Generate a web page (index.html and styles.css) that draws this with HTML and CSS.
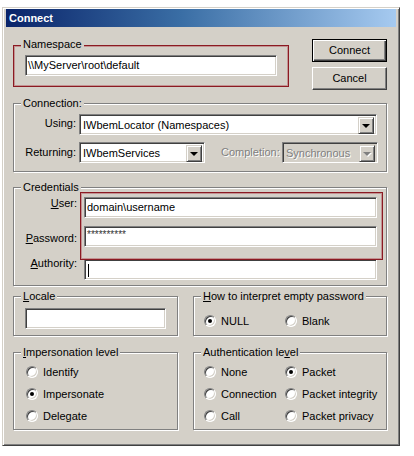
FILE: index.html
```html
<!DOCTYPE html>
<html lang="en">
<head>
<meta charset="utf-8">
<title>Connect</title>
<link rel="stylesheet" href="styles.css">
</head>
<body>
<div class="dialog">
  <div class="titlebar">Connect</div>
  <div class="content">
    <div class="top-row">
      <div class="group ns-group">
        <span class="group-label">Namespace</span>
        <div class="field ns-field">\\MyServer\root\default</div>
      </div>
      <div class="buttons">
        <div class="btn btn-default">Connect</div>
        <div class="btn btn-cancel">Cancel</div>
      </div>
    </div>

    <div class="group conn-group">
      <span class="group-label">Connection:</span>
      <div class="row">
        <span class="lbl conn-lbl lbl-using">Using:</span>
        <div class="combo using-combo"><span class="combo-text">IWbemLocator (Namespaces)</span><span class="dd"><i class="arrow"></i></span></div>
      </div>
      <div class="row row-returning">
        <span class="lbl conn-lbl">Returning:</span>
        <div class="combo ret-combo"><span class="combo-text">IWbemServices</span><span class="dd"><i class="arrow"></i></span></div>
        <span class="disabled-text completion-lbl">Completion:</span>
        <div class="combo combo-disabled sync-combo"><span class="combo-text">Synchronous</span><span class="dd"><i class="arrow"></i></span></div>
      </div>
    </div>

    <div class="group cred-group">
      <span class="group-label">Credentials</span>
      <div class="row">
        <span class="lbl cred-lbl"><u>U</u>ser:</span>
        <div class="field cred-field">domain\username</div>
      </div>
      <div class="row row-password">
        <span class="lbl cred-lbl lbl-password"><u>P</u>assword:</span>
        <div class="field cred-field password">**********</div>
      </div>
      <div class="row row-authority">
        <span class="lbl cred-lbl lbl-authority"><u>A</u>uthority:</span>
        <div class="field cred-field"><span class="caret"></span></div>
      </div>
      <div class="highlight cred-highlight"></div>
    </div>

    <div class="pair-row pair-row-1">
      <div class="group locale-group">
        <span class="group-label"><u>L</u>ocale</span>
        <div class="field locale-field"></div>
      </div>
      <div class="group howto-group">
        <span class="group-label"><u>H</u>ow to interpret empty password</span>
        <div class="radio-grid">
          <div class="radio"><span class="dot checked"></span>NULL</div>
          <div class="radio"><span class="dot"></span>Blank</div>
        </div>
      </div>
    </div>

    <div class="pair-row pair-row-2">
      <div class="group imp-group">
        <span class="group-label"><u>I</u>mpersonation level</span>
        <div class="radio"><span class="dot"></span>Identify</div>
        <div class="radio"><span class="dot checked"></span>Impersonate</div>
        <div class="radio"><span class="dot"></span>Delegate</div>
      </div>
      <div class="group auth-group">
        <span class="group-label">Authentication le<u>v</u>el</span>
        <div class="radio-grid">
          <div class="radio"><span class="dot"></span>None</div>
          <div class="radio"><span class="dot checked"></span>Packet</div>
          <div class="radio"><span class="dot"></span>Connection</div>
          <div class="radio"><span class="dot"></span>Packet integrity</div>
          <div class="radio"><span class="dot"></span>Call</div>
          <div class="radio"><span class="dot"></span>Packet privacy</div>
        </div>
      </div>
    </div>
  </div>
</div>
</body>
</html>
```

FILE: styles.css
```css
* {
  box-sizing: border-box;
}

html,
body {
  margin: 0;
  padding: 0;
  background: #ffffff;
}

body {
  font-family: "Liberation Sans", Arial, sans-serif;
  font-size: 11px;
  line-height: 13px;
  color: #000000;
}

u {
  text-decoration: underline;
  text-underline-offset: 1px;
}

.dialog {
  margin: 7px 0 0 2px;
  width: 398px;
  height: 439px;
  background: #d4d0c8;
  border: 1px solid;
  border-color: #d4d0c8 #404040 #404040 #d4d0c8;
  box-shadow: inset 1px 1px #ffffff, inset -1px -1px #808080;
  padding: 1px 3px 3px 3px;
}

.titlebar {
  height: 18px;
  line-height: 18px;
  padding-left: 3px;
  background: linear-gradient(to right, #0a246a 0%, #3a6ea5 45%, #a6caf0 100%);
  color: #ffffff;
  font-weight: bold;
  font-size: 11px;
}

.content {
  padding: 0 9px 0 7px;
}

/* group boxes */
.group {
  position: relative;
  border: 1px solid #808080;
  box-shadow: inset 1px 1px #ffffff, 1px 1px #ffffff;
}

.group-label {
  position: absolute;
  top: -7px;
  left: 7px;
  padding: 0 2px;
  background: #d4d0c8;
  line-height: 13px;
  white-space: nowrap;
}

.highlight {
  position: absolute;
  border: 1px solid #8b1a22;
  box-shadow: inset 0 0 0 1px rgba(176, 70, 80, 0.45);
  pointer-events: none;
}

/* fields */
.field {
  height: 21px;
  background: #ffffff;
  border: 1px solid;
  border-color: #808080 #ffffff #ffffff #808080;
  box-shadow: inset 1px 1px #404040, inset -1px -1px #d4d0c8;
  padding: 0 2px 0 2px;
  line-height: 19px;
  white-space: nowrap;
  overflow: hidden;
}

.combo {
  height: 21px;
  display: flex;
  align-items: stretch;
  background: #ffffff;
  border: 1px solid;
  border-color: #808080 #ffffff #ffffff #808080;
  box-shadow: inset 1px 1px #404040, inset -1px -1px #d4d0c8;
  padding: 2px;
}

.combo-text {
  flex: 1;
  padding-left: 1px;
  line-height: 17px;
  white-space: nowrap;
  overflow: hidden;
}

.dd {
  width: 16px;
  height: 17px;
  flex: none;
  display: flex;
  align-items: center;
  justify-content: center;
  background: #d4d0c8;
  border: 1px solid;
  border-color: #d4d0c8 #404040 #404040 #d4d0c8;
  box-shadow: inset 1px 1px #ffffff, inset -1px -1px #808080;
}

.arrow {
  display: block;
  width: 0;
  height: 0;
  border-left: 4px solid transparent;
  border-right: 4px solid transparent;
  border-top: 4px solid #000000;
  margin-top: 1px;
}

.combo-disabled {
  background: #d4d0c8;
}

.combo-disabled .combo-text,
.disabled-text {
  color: #808080;
  text-shadow: 1px 1px #ffffff;
}

.combo-disabled .arrow {
  border-top-color: #808080;
  filter: drop-shadow(1px 1px 0 #ffffff);
}

/* buttons */
.top-row {
  display: flex;
  align-items: flex-start;
  margin-top: 12px;
}

.ns-group {
  margin-top: 6px;
  width: 276px;
  height: 42px;
  border-color: #8b1a22;
  box-shadow: inset 0 0 0 1px rgba(176, 70, 80, 0.45);
  padding: 9px 0 0 11px;
}

.ns-group .group-label {
  top: -8px;
}

.ns-field {
  width: 252px;
}

.buttons {
  margin-left: auto;
  display: flex;
  flex-direction: column;
  gap: 5px;
}

.btn {
  width: 75px;
  height: 23px;
  display: flex;
  align-items: center;
  justify-content: center;
  border: 1px solid;
  border-color: #ffffff #404040 #404040 #ffffff;
  box-shadow: inset -1px -1px #808080, inset 1px 1px #d4d0c8;
  padding-bottom: 1px;
}

.btn-default {
  border-color: #000000;
  box-shadow: inset 1px 1px #ffffff, inset -1px -1px #404040, inset -2px -2px #808080;
}

/* connection */
.conn-group {
  margin-top: 13px;
  height: 69px;
  padding: 10px 8px 0 0;
}

.row {
  display: flex;
  align-items: flex-start;
}

.lbl {
  flex: none;
  text-align: right;
  white-space: nowrap;
}

.conn-lbl {
  width: 62px;
  margin-right: 3px;
  padding-top: 4px;
}

.conn-lbl.lbl-using {
  padding-top: 3px;
}

.using-combo {
  width: 298px;
}

.row-returning {
  margin-top: 7px;
}

.ret-combo {
  width: 126px;
}

.completion-lbl {
  margin-left: 16px;
  padding-top: 4px;
}

.sync-combo {
  width: 96px;
  margin-left: auto;
}

/* credentials */
.cred-group {
  margin-top: 15px;
  height: 99px;
  padding: 9px 8px 0 0;
}

.cred-lbl {
  width: 63px;
  margin-right: 7px;
  padding-top: 0;
}

.cred-field {
  width: 293px;
}

.row-password {
  margin-top: 8px;
}

.lbl-password {
  padding-top: 6px;
}

.row-authority {
  margin-top: 12px;
}

.lbl-authority {
  margin-top: -2px;
}

.password {
  line-height: 15px;
  font-size: 10px;
  letter-spacing: 0;
  color: #333333;
}

.caret {
  display: inline-block;
  width: 1px;
  height: 13px;
  background: #000000;
  vertical-align: middle;
  margin-left: 1px;
}

.cred-highlight {
  left: 66px;
  top: 4px;
  width: 303px;
  height: 68px;
}

/* lower groups */
.pair-row {
  display: flex;
  align-items: stretch;
}

.pair-row-1 {
  margin-top: 10px;
  height: 40px;
}

.pair-row-2 {
  margin-top: 16px;
  height: 78px;
}

.locale-group {
  width: 165px;
  padding: 11px 0 0 11px;
}

.locale-field {
  width: 141px;
}

.howto-group,
.auth-group {
  width: 194px;
  margin-left: 15px;
}

.howto-group {
  padding: 16px 0 0 10px;
}

.imp-group {
  width: 165px;
  padding: 8px 0 0 12px;
}

.auth-group {
  padding: 8px 0 0 10px;
}

.radio-grid {
  display: grid;
  grid-template-columns: 81px auto;
}

.radio {
  display: flex;
  align-items: center;
  height: 22px;
  white-space: nowrap;
}

.howto-group .radio {
  height: 16px;
}

.dot {
  flex: none;
  width: 12px;
  height: 12px;
  margin-right: 5px;
  border-radius: 50%;
  background: #ffffff;
  border: 1px solid;
  border-color: #808080 #ffffff #ffffff #808080;
  box-shadow: inset 1px 1px #404040, inset -1px -1px #d4d0c8;
  display: flex;
  align-items: center;
  justify-content: center;
}

.dot.checked::after {
  content: "";
  width: 4px;
  height: 4px;
  border-radius: 50%;
  background: #000000;
}
```
